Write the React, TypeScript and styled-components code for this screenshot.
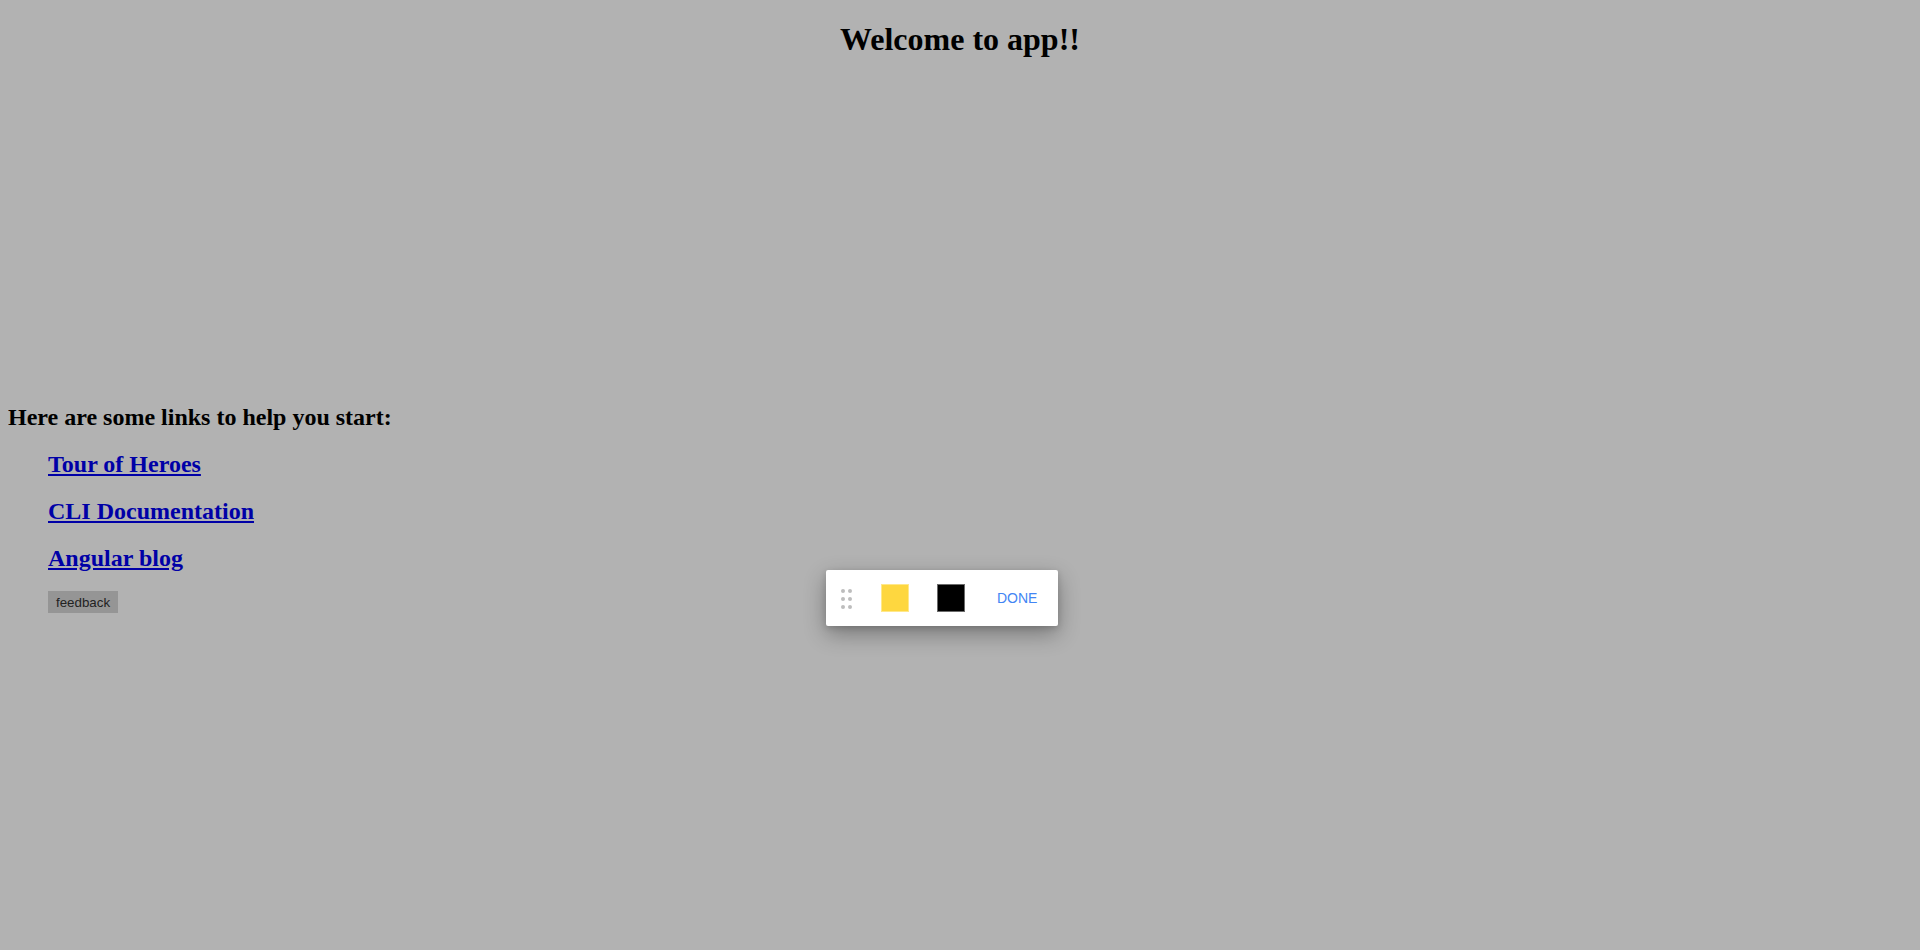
import React from "react";
import styled, { createGlobalStyle } from "styled-components";

const Global = createGlobalStyle`
  html, body { background: #b2b2b2; }
  body {
    margin: 0 8px 8px;
    font-family: "Liberation Serif", "Times New Roman", serif;
    color: #000;
  }
`;

const Hero = styled.div`
  text-align: center;
`;

const Title = styled.h1`
  font-size: 32px;
  font-weight: bold;
  margin: 21.44px 0;
`;

const LogoSlot = styled.span`
  display: inline-block;
  width: 300px;
  height: 300px;
`;

const Subtitle = styled.h2`
  font-size: 24px;
  font-weight: bold;
  margin: 19.92px 0;
`;

const LinkList = styled.ul`
  list-style: none;
  margin: 16px 0;
  padding-left: 40px;
`;

const LinkItem = styled.li``;

const LinkHeading = styled.h2`
  font-size: 24px;
  font-weight: bold;
  margin: 19.92px 0;
`;

const Anchor = styled.a`
  color: #0000a7;
  text-decoration: underline;
`;

const FeedbackButton = styled.button`
  font-family: "Liberation Sans", Arial, sans-serif;
  font-size: 13.33px;
  color: #222;
  background: #959595;
  border: none;
  padding: 1px 6px;
  height: 22px;
  width: 70px;
  margin-top: 0;
  display: block;
`;

const Toolbar = styled.div`
  position: absolute;
  left: 826px;
  top: 570px;
  width: 232px;
  height: 56px;
  background: #fff;
  border-radius: 2px;
  box-shadow: 0 8px 22px rgba(0, 0, 0, 0.32), 0 2px 6px rgba(0, 0, 0, 0.14);
  display: flex;
  align-items: center;
  padding-left: 15px;
  box-sizing: border-box;
`;

const Grip = styled.div`
  display: grid;
  grid-template-columns: repeat(2, 4px);
  grid-auto-rows: 4px;
  column-gap: 3px;
  row-gap: 4px;
  margin-right: 29px;
  margin-top: 2px;
`;

const Dot = styled.span`
  width: 4px;
  height: 4px;
  border-radius: 50%;
  background: #bdbdbd;
`;

const Swatch = styled.div<{ $fill: string; $border: string }>`
  width: 28px;
  height: 28px;
  box-sizing: border-box;
  background: ${(p) => p.$fill};
  border: 1px solid ${(p) => p.$border};
  margin-right: 28px;
`;

const Done = styled.span`
  font-family: "Liberation Sans", Arial, sans-serif;
  font-size: 14px;
  color: #4285f4;
  margin-left: 4px;
`;

export default function App() {
  return (
    <>
      <Global />
      <Hero>
        <Title>Welcome to app!!</Title>
        <LogoSlot />
      </Hero>
      <Subtitle>Here are some links to help you start: </Subtitle>
      <LinkList>
        <LinkItem>
          <LinkHeading>
            <Anchor href="#">Tour of Heroes</Anchor>
          </LinkHeading>
        </LinkItem>
        <LinkItem>
          <LinkHeading>
            <Anchor href="#">CLI Documentation</Anchor>
          </LinkHeading>
        </LinkItem>
        <LinkItem>
          <LinkHeading>
            <Anchor href="#">Angular blog</Anchor>
          </LinkHeading>
        </LinkItem>
        <FeedbackButton>feedback</FeedbackButton>
      </LinkList>
      <Toolbar>
        <Grip>
          {Array.from({ length: 6 }).map((_, i) => (
            <Dot key={i} />
          ))}
        </Grip>
        <Swatch $fill="#fed73f" $border="#ffe88a" />
        <Swatch $fill="#000" $border="#6b6b6b" />
        <Done>DONE</Done>
      </Toolbar>
    </>
  );
}
